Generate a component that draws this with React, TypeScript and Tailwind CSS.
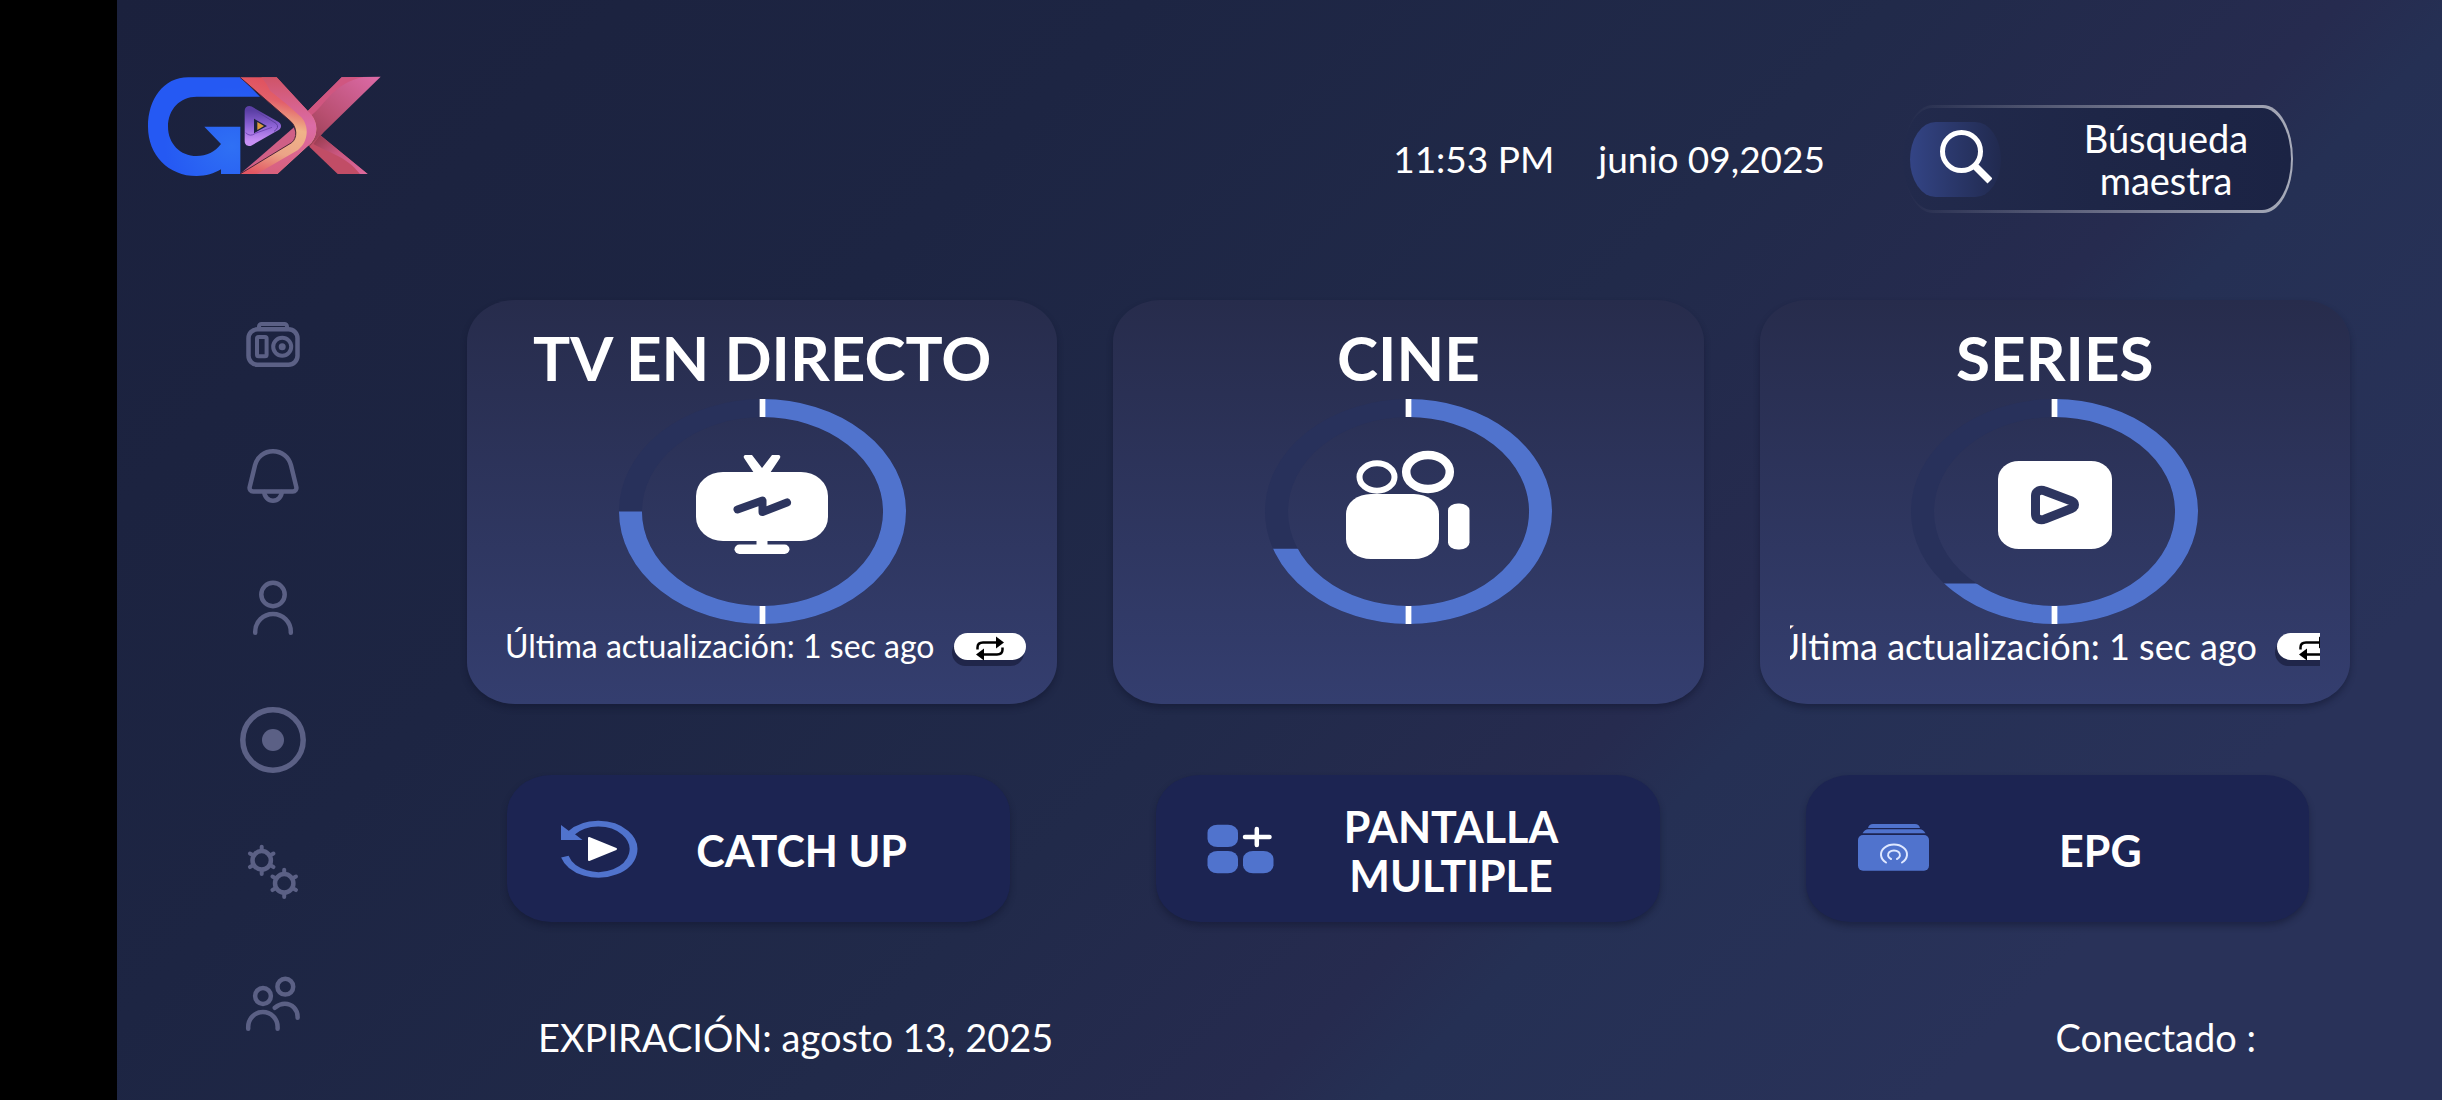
import type { ReactNode } from "react";

function Logo() {
  return (
    <svg viewBox="144 108 702 300" className="h-[100px] w-[234px]" role="img" aria-label="GX">
      <defs>
        <radialGradient id="gBlue" cx="0.75" cy="0.7" r="0.6">
          <stop offset="0" stopColor="#2f70f4" />
          <stop offset="1" stopColor="#2559f3" />
        </radialGradient>
        <linearGradient id="xInner" x1="0.2" y1="0" x2="0" y2="1">
          <stop offset="0" stopColor="#e0525f" />
          <stop offset="0.18" stopColor="#e2606a" />
          <stop offset="0.42" stopColor="#f0b488" />
          <stop offset="0.7" stopColor="#eba487" />
          <stop offset="0.95" stopColor="#e25763" />
        </linearGradient>
        <linearGradient id="xFront" x1="0" y1="0" x2="0" y2="1">
          <stop offset="0" stopColor="#cf5468" />
          <stop offset="0.5" stopColor="#dc6ca6" />
          <stop offset="1" stopColor="#d8607c" />
        </linearGradient>
        <linearGradient id="xArm" x1="1" y1="0" x2="0" y2="1">
          <stop offset="0" stopColor="#dd6ba8" />
          <stop offset="0.6" stopColor="#b84f70" />
          <stop offset="1" stopColor="#8e3a4d" />
        </linearGradient>
        <linearGradient id="xLeg" x1="0" y1="0" x2="1" y2="1">
          <stop offset="0" stopColor="#93394a" />
          <stop offset="0.45" stopColor="#c9567f" />
          <stop offset="1" stopColor="#de6b9f" />
        </linearGradient>
        <linearGradient id="tri" x1="0" y1="0" x2="0" y2="1">
          <stop offset="0" stopColor="#5b3fa5" />
          <stop offset="0.5" stopColor="#8d63d6" />
          <stop offset="1" stopColor="#c890f5" />
        </linearGradient>
      </defs>
      <path
        d="M422 112H265C190 112 144 178 144 260C144 345 205 408 290 408C318 408 342 401 363 388V402H421V260H313L363 312C345 336 320 348 290 348C240 348 204 310 204 260C204 208 240 170 290 170H480Z"
        fill="url(#gBlue)"
      />
      <path d="M725 112L842 110L672 276L632 320L590 300L624 212Z" fill="url(#xArm)" />
      <path d="M725 112C690 150 660 175 624 212L632 228C680 190 700 130 790 111Z" fill="#d05680" />
      <path d="M660 285L803 402H713L628 320Z" fill="#c14d66" />
      <path d="M660 285L803 402H780C740 350 690 340 640 312Z" fill="url(#xLeg)" />
      <path d="M420 402L582 262L592 300L500 370Z" fill="#cf5f86" />
      <path
        d="M420 112H530L634 224C654 248 654 284 634 308L532 402H420L575 308C592 295 592 262 572 244Z"
        fill="url(#xInner)"
      />
      <path
        d="M484 112H530L634 224C654 248 654 284 634 308L532 402H470L594 330C626 306 628 258 604 232Q560 190 510 152Q500 130 484 112Z"
        fill="url(#xFront)"
      />
      <path d="M420 112L572 244C592 262 592 295 575 308L420 402" fill="none" stroke="#4a2438" strokeWidth="3" />
      <path d="M448 212L529 258L448 304Z" fill="none" stroke="url(#tri)" strokeWidth="28" strokeLinejoin="round" />
      <path d="M470 214L528 250Q540 262 522 274" fill="none" stroke="#5d419f" strokeWidth="3" />
      <path d="M437 278Q450 292 466 280L516 262" fill="none" stroke="#7449b8" strokeWidth="3" />
      <path d="M472 246L492 258L472 270Z" fill="#dd9a3c" />
    </svg>
  );
}

function SideIcon({ children }: { children: ReactNode }) {
  return (
    <svg
      viewBox="0 0 66 66"
      className="size-[66px]"
      fill="none"
      stroke="currentColor"
      strokeWidth="4.5"
      strokeLinecap="round"
      strokeLinejoin="round"
      aria-hidden
    >
      {children}
    </svg>
  );
}

function Gear({ x, y }: { x: number; y: number }) {
  return (
    <g transform={`translate(${x} ${y})`}>
      <circle r="9.2" />
      {[0, 60, 120, 180, 240, 300].map((angle) => (
        <path key={angle} d="M0-10.5V-13.6" strokeWidth="4" transform={`rotate(${angle})`} />
      ))}
    </g>
  );
}

const sideItems = [
  {
    label: "Radio",
    icon: (
      <SideIcon>
        <rect x="8.5" y="18.3" width="49" height="35.4" rx="9" />
        <path d="M19 17v-1.5a2.5 2.5 0 0 1 2.5-2.5h23a2.5 2.5 0 0 1 2.5 2.5V17" strokeWidth="4" />
        <rect x="17" y="26" width="9.6" height="19.3" rx="1.5" strokeWidth="4" />
        <circle cx="42.2" cy="35.7" r="9" strokeWidth="4" />
        <circle cx="42.2" cy="35.7" r="3.5" fill="currentColor" stroke="none" />
      </SideIcon>
    ),
  },
  {
    label: "Notificaciones",
    icon: (
      <SideIcon>
        <path d="M33 8.3c-9 0-16 6-18 14L9.7 44a3.5 3.5 0 0 0 3.4 4.4h39.8a3.5 3.5 0 0 0 3.4-4.4L51 22.3c-2-8-9-14-18-14Z" />
        <path d="M24.3 49a8.7 8.7 0 0 0 17.4 0" />
      </SideIcon>
    ),
  },
  {
    label: "Cuenta",
    icon: (
      <SideIcon>
        <circle cx="33" cy="19.5" r="11.7" />
        <path d="M15.2 57.8v-1a17.8 17.8 0 0 1 35.6 0v1" />
      </SideIcon>
    ),
  },
  {
    label: "Grabaciones",
    icon: (
      <SideIcon>
        <circle cx="33" cy="33" r="30.2" strokeWidth="5.5" />
        <circle cx="33" cy="33" r="11" fill="currentColor" stroke="none" />
      </SideIcon>
    ),
  },
  {
    label: "Ajustes",
    icon: (
      <SideIcon>
        <Gear x={21.7} y={21.3} />
        <Gear x={44.2} y={44.3} />
      </SideIcon>
    ),
  },
  {
    label: "Usuarios",
    icon: (
      <SideIcon>
        <circle cx="23" cy="25" r="7.9" />
        <path d="M8.2 57.8v-2a14.7 14.7 0 0 1 29.4 0v2" />
        <circle cx="45.3" cy="15.7" r="7.9" />
        <path d="M34.8 36.8c3-2.5 6-4 10-4 7.5 0 12.8 6 12.8 13v1" />
      </SideIcon>
    ),
  },
];

function TvIcon() {
  return (
    <svg viewBox="0 0 132 100" className="h-[100px] w-[132px]" aria-hidden>
      <path d="M49 0h7l10 13L76 0h7q2 1 1 3L74 18H58L48 3q-1-2 1-3Z" fill="#fff" />
      <rect y="17" width="132" height="69" rx="27" ry="24" fill="#fff" />
      <path d="M60.5 84h11v8h-11z" fill="#fff" />
      <rect x="38.5" y="89.5" width="55" height="9.5" rx="5" fill="#fff" />
      <path
        d="M41.5 54.5L66.500 45.500V57L91 47.500"
        fill="none"
        stroke="#2d355f"
        strokeWidth="8"
        strokeLinecap="round"
        strokeLinejoin="round"
      />
    </svg>
  );
}

function CameraIcon() {
  return (
    <svg viewBox="0 0 126 110" className="h-[110px] w-[126px]" fill="#fff" aria-hidden>
      <g fill="none" stroke="#fff">
        <ellipse cx="32" cy="27" rx="17.5" ry="13.7" strokeWidth="6" />
        <ellipse cx="83" cy="22" rx="21.8" ry="17" strokeWidth="8.5" />
      </g>
      <rect x="1" y="44" width="93" height="65" rx="25" ry="20" />
      <rect x="103" y="53.5" width="21.500" height="46" rx="10" ry="7" />
    </svg>
  );
}

function SeriesIcon() {
  return (
    <svg viewBox="0 0 114 88" className="h-[88px] w-[114px]" aria-hidden>
      <rect width="114" height="88" rx="21" ry="18" fill="#fff" />
      <path
        d="M37.5 35v18c0 5 5 7 9.500 5l26.500-10.500c4-2 4-5.500 0-7.500L47 30c-4.500-2-9.500 0-9.500 5Z"
        fill="none"
        stroke="#2d355f"
        strokeWidth="9"
        strokeLinejoin="round"
      />
    </svg>
  );
}

/* Ring filled on the whole right side, and on the left up to the given level */
function Ring({ id, level, children }: { id: string; level: number; children: ReactNode }) {
  return (
    <div className="relative mt-3 flex h-[225px] w-[287px] items-center justify-center pb-[14px]">
      <svg viewBox="0 0 100 100" preserveAspectRatio="none" className="absolute inset-0 size-full" aria-hidden>
        <clipPath id={id}>
          <path d={`M50 0H100V100H0V${level}H50Z`} />
        </clipPath>
        <circle cx="50" cy="50" r="46" fill="none" stroke="#28315b" strokeWidth="8" />
        <circle cx="50" cy="50" r="46" fill="none" stroke="#5073cd" strokeWidth="8" clipPath={`url(#${id})`} />
        <path d="M49 0h2v8h-2zM49 92h2v8h-2z" fill="#fff" />
      </svg>
      <div className="relative">{children}</div>
    </div>
  );
}

function RefreshButton() {
  return (
    <button
      type="button"
      aria-label="Actualizar"
      className="flex h-[27px] w-[72px] shrink-0 items-center justify-center rounded-full bg-white text-black shadow-[-2px_6px_0_#20264a]"
    >
      <svg viewBox="0 0 28 25" className="h-[25px] w-7 translate-y-[2px]" aria-hidden>
        <path
          d="M1.5 13.5V11.500Q1.500 6.500 7 6.500H21M26.500 11.500V13.500Q26.500 18.500 21 18.500H7"
          fill="none"
          stroke="currentColor"
          strokeWidth="2.5"
        />
        <path d="M20 0.5L28 6.500L20 12.500ZM8 12.500L0 18.500L8 24.500Z" fill="currentColor" />
      </svg>
    </button>
  );
}

const cards = [
  {
    id: "live",
    title: "TV EN DIRECTO",
    level: 50,
    icon: <TvIcon />,
    marquee: "ml-2 text-[32px]",
  },
  { id: "movies", title: "CINE", level: 66.5, icon: <CameraIcon />, marquee: null },
  {
    id: "series",
    title: "SERIES",
    level: 82,
    icon: <SeriesIcon />,
    marquee: "-ml-4 text-[36px]",
  },
];

function CatchUpIcon() {
  return (
    <svg viewBox="0 0 84 60" className="h-[60px] w-[84px] shrink-0" aria-hidden>
      <path
        d="M-24.2 8A25.6 25.6 0 1 0 -19.7 -15.4"
        transform="translate(43 30.7) scale(1.37 1)"
        fill="none"
        stroke="#5073cd"
        strokeWidth="5.7"
      />
      <path d="M6 7V22H27.5L19 15.500L14 13Z" fill="#5073cd" />
      <path d="M34 20V42L61 31Z" fill="#fff" stroke="#fff" strokeWidth="2" strokeLinejoin="round" />
    </svg>
  );
}

function MultiIcon() {
  return (
    <svg viewBox="0 0 84 60" className="h-[60px] w-[84px] shrink-0" aria-hidden>
      <g fill="#5073cd">
        <rect x="3.5" y="6.7" width="30.5" height="22.3" rx="10" ry="8" />
        <rect x="3.5" y="33" width="30.5" height="22.3" rx="10" ry="8" />
        <rect x="39" y="33" width="30.5" height="22.3" rx="10" ry="8" />
      </g>
      <path d="M41 19H65.500M52.800 11V27" stroke="#fff" strokeWidth="4.5" strokeLinecap="round" />
    </svg>
  );
}

function EpgIcon() {
  return (
    <svg viewBox="0 0 84 60" className="h-[60px] w-[84px] shrink-0" aria-hidden>
      <g fill="#5073cd">
        <path d="M14 10Q15 6 19 6H61Q65 6 66 10Z" />
        <path d="M8.5 15.3Q11 11.3 14 11.3H66Q69 11.3 71.5 15.3Z" />
        <rect x="4" y="17" width="71" height="35.7" rx="5" />
      </g>
      <g fill="none" stroke="#dfe8ff" strokeWidth="2" strokeLinecap="round">
        <path d="M32 44.5A13 10 0 1 1 48 44.5" />
        <path d="M37 41A6 4.600 0 1 1 43 41" />
      </g>
    </svg>
  );
}

const actions = [
  { label: "CATCH UP", icon: <CatchUpIcon /> },
  { label: "PANTALLA MULTIPLE", icon: <MultiIcon /> },
  { label: "EPG", icon: <EpgIcon /> },
];

export default function App() {
  return (
    <div className="flex min-h-screen bg-black font-['Lato','Noto_Sans',sans-serif] text-white">
      <div className="w-[117px] shrink-0" />

      <div className="flex flex-1 bg-[linear-gradient(135deg,#1b213d_0%,#1d2543_30%,#212a4a_52%,#262b4f_65%,#253054_69%,#293259_85%,#293259_100%)]">
        {/* Sidebar */}
        <aside className="w-[350px] shrink-0 pt-[76px]">
          <a href="#" className="ml-[31px] block w-fit">
            <Logo />
          </a>
          <nav className="mt-[135px] flex w-[312px] flex-col items-center gap-[66px] text-[#5b6085]">
            {sideItems.map((item) => (
              <button key={item.label} type="button" aria-label={item.label}>
                {item.icon}
              </button>
            ))}
          </nav>
        </aside>

        <div className="flex flex-1 flex-col">
          {/* Top bar */}
          <header className="flex items-center justify-end pr-[149px] pt-[105px] text-[37px] leading-[42px]">
            <span>11:53 PM</span>
            <span className="ml-11">junio 09,2025</span>
            <button
              type="button"
              className="ml-[78px] flex h-[108px] w-[390px] rounded-[30px/54px] bg-linear-to-r from-transparent via-white/30 to-white/60 py-[3px] pr-[2px]"
            >
              <span className="flex flex-1 items-center self-stretch rounded-[29px/51px] bg-linear-to-r from-[#222a4c] via-[#1e2647] to-[#1b2344] pl-[7px]">
                <span className="flex h-[75px] w-[91px] items-center justify-center rounded-[26px/38px] bg-linear-to-r from-[#334485] to-[#212a4f] pb-1 pl-5">
                  <svg viewBox="0 0 52 54" className="h-[54px] w-[52px]" fill="none" stroke="#fff" aria-hidden>
                    <circle cx="21.5" cy="21.5" r="19" strokeWidth="5" />
                    <path d="M34 35L50 51" strokeWidth="7" />
                  </svg>
                </span>
                <span className="flex-1 pl-20 pr-10 text-center text-[38px]">Búsqueda maestra</span>
              </span>
            </button>
          </header>

          {/* Main sections */}
          <main>
            <div className="mt-[87px] grid grid-cols-3 gap-14 pr-[92px]">
              {cards.map((card) => (
                <section
                  key={card.id}
                  className="flex min-w-0 flex-col items-center rounded-[48px/42px] bg-linear-to-b from-[#272c4c] to-[#343e6f] pb-[36px] pt-[27px] shadow-[0_4px_6px_rgba(16,20,45,0.45)]"
                >
                  <h2 className="text-[62px] font-bold leading-[60px]">{card.title}</h2>
                  <Ring id={card.id} level={card.level}>
                    {card.icon}
                  </Ring>
                  <div className="flex h-11 w-full px-[30px]">
                    {card.marquee && (
                      <div className="flex w-full items-center overflow-hidden">
                        <p className={`mr-5 shrink-0 whitespace-nowrap leading-[44px] ${card.marquee}`}>
                          Última actualización: 1 sec ago
                        </p>
                        <RefreshButton />
                      </div>
                    )}
                  </div>
                </section>
              ))}
            </div>

            <div className="mt-[71px] grid grid-cols-3 gap-[146px] pl-10 pr-[133px]">
              {actions.map((action) => (
                <button
                  key={action.label}
                  type="button"
                  className="flex h-[147px] items-center rounded-[44px/38px] bg-[#1c2452] pb-[2px] pl-12 pr-[46px] text-[43px] font-bold leading-[49px] shadow-[0_4px_6px_rgba(16,20,45,0.45)]"
                >
                  {action.icon}
                  <span className="flex-1 px-8 pt-[6px] text-center">{action.label}</span>
                </button>
              ))}
            </div>
          </main>

          <footer className="mt-[91px] flex justify-between pl-[71px] pr-[186px] text-[38px] leading-[48px]">
            <p>EXPIRACIÓN: agosto 13, 2025</p>
            <p>Conectado :</p>
          </footer>
        </div>
      </div>
    </div>
  );
}
